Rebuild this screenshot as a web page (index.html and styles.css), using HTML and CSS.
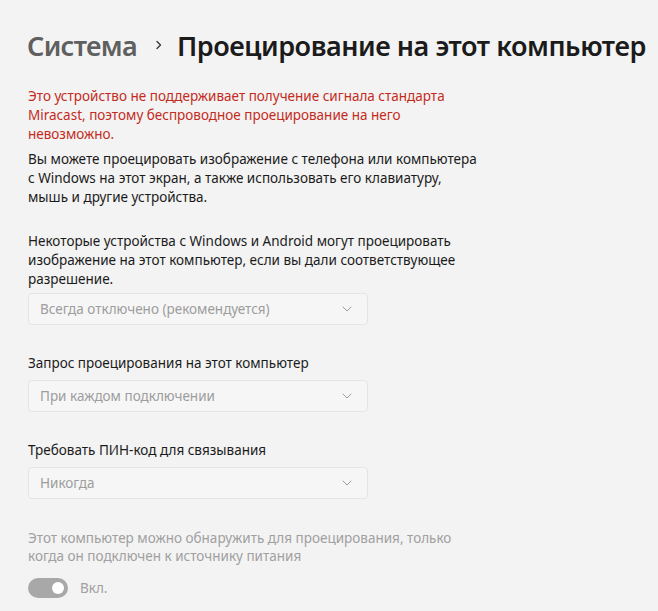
FILE: index.html
```html
<!DOCTYPE html>
<html lang="ru">
<head>
<meta charset="utf-8">
<link rel="stylesheet" href="styles.css">
</head>
<body>
<main class="page">
  <header class="crumbs">
    <span class="crumb-parent">Система</span>
    <svg class="crumb-sep" width="10" height="12" viewBox="0 0 10 12"><path d="M3 2.5 L6.5 6 L3 9.5" fill="none" stroke="#3a3a3a" stroke-width="1.4" stroke-linecap="round" stroke-linejoin="round"/></svg>
    <span class="crumb-current">Проецирование на этот компьютер</span>
  </header>

  <div class="content">
    <p class="error">Это устройство не поддерживает получение сигнала стандарта Miracast, поэтому беспроводное проецирование на него невозможно.</p>
    <p class="text intro">Вы можете проецировать изображение с телефона или компьютера с Windows на этот экран, а также использовать его клавиатуру, мышь и другие устройства.</p>

    <section class="setting first">
      <p class="text">Некоторые устройства с Windows и Android могут проецировать изображение на этот компьютер, если вы дали соответствующее разрешение.</p>
      <div class="select"><span>Всегда отключено (рекомендуется)</span><svg class="chev" width="10" height="6" viewBox="0 0 10 6"><path d="M1 1 L5 5 L9 1" fill="none" stroke="#9a9a9a" stroke-width="1" stroke-linecap="round" stroke-linejoin="round"/></svg></div>
    </section>

    <section class="setting">
      <p class="text">Запрос проецирования на этот компьютер</p>
      <div class="select"><span>При каждом подключении</span><svg class="chev" width="10" height="6" viewBox="0 0 10 6"><path d="M1 1 L5 5 L9 1" fill="none" stroke="#9a9a9a" stroke-width="1" stroke-linecap="round" stroke-linejoin="round"/></svg></div>
    </section>

    <section class="setting">
      <p class="text">Требовать ПИН-код для связывания</p>
      <div class="select"><span>Никогда</span><svg class="chev" width="10" height="6" viewBox="0 0 10 6"><path d="M1 1 L5 5 L9 1" fill="none" stroke="#9a9a9a" stroke-width="1" stroke-linecap="round" stroke-linejoin="round"/></svg></div>
    </section>

    <section class="setting disabled">
      <p class="text">Этот компьютер можно обнаружить для проецирования, только когда он подключен к источнику питания</p>
      <div class="toggle-row">
        <span class="toggle"><span class="knob"></span></span>
        <span class="toggle-label">Вкл.</span>
      </div>
    </section>
  </div>
</main>
</body>
</html>
```
FILE: styles.css
```css
html, body {
  margin: 0;
  padding: 0;
  background: #f3f3f3;
}
body {
  font-family: "Noto Sans", "Open Sans", sans-serif;
  color: #1b1b1b;
  font-size: 14px;
}
.page {
  padding: 27px 0 0 28px;
}
.crumbs {
  display: flex;
  align-items: center;
  white-space: nowrap;
  height: 36px;
  margin-left: -1px;
}
.crumbs > * {
  flex-shrink: 0;
}
.crumb-parent {
  font-size: 27px;
  font-weight: 600;
  color: #5f5f5f;
  letter-spacing: -0.7px;
}
.crumb-sep {
  margin: 0 13px 0 17px;
}
.crumb-current {
  font-size: 27px;
  font-weight: 600;
  color: #1b1b1b;
  letter-spacing: -0.45px;
}
.content {
  width: 450px;
}
p {
  margin: 0;
}
.error {
  margin-top: 24px;
  color: #c42b1c;
  font-size: 13.5px;
  line-height: 19px;
}
.text {
  font-size: 13.5px;
  line-height: 19px;
}
.intro {
  margin-top: 6px;
}
.setting {
  margin-top: 29px;
}
.setting.first {
  margin-top: 25px;
}
.select {
  margin-top: 7px;
  width: 340px;
  height: 32px;
  box-sizing: border-box;
  border: 1px solid #e5e5e5;
  border-radius: 4px;
  background: #f6f6f6;
  display: flex;
  align-items: center;
  justify-content: space-between;
  padding: 0 15px 0 11px;
  color: #9d9d9d;
  font-size: 13.5px;
}
.first .select {
  margin-top: 4px;
}
.disabled {
  margin-top: 30px;
}
.disabled .text {
  color: #a0a0a0;
  line-height: 18px;
}
.toggle-row {
  display: flex;
  align-items: center;
  margin-top: 13px;
}
.toggle {
  width: 40px;
  height: 20px;
  border-radius: 10px;
  background: #a8a8a8;
  display: flex;
  align-items: center;
  justify-content: flex-end;
  padding-right: 4px;
  box-sizing: border-box;
}
.knob {
  width: 12px;
  height: 12px;
  border-radius: 50%;
  background: #fff;
}
.toggle-label {
  margin-left: 12px;
  color: #a0a0a0;
  font-size: 13.5px;
}
```
